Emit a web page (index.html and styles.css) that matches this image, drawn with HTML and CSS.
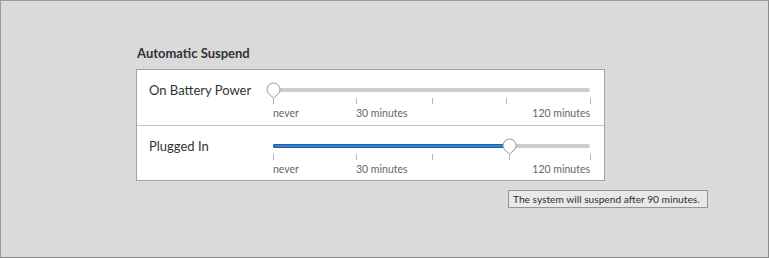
FILE: index.html
```html
<!DOCTYPE html>
<html lang="en">
<head>
  <meta charset="UTF-8" />
  <title>Power</title>
  <link rel="stylesheet" href="styles.css">
</head>
<body>

  <div class="window">
    <div class="panel">
      <h2 class="title">Automatic Suspend</h2>

      <div class="frame">
        <div class="row">
          <div class="row-label">On Battery Power</div>
          <div class="scale">
            <div class="slider">
              <div class="track"></div>
              <div class="knob" style="left: 0px">
                <svg width="17" height="17" viewBox="0 0 17 17"><path d="M8.5 16 L3.9 12.1 A6.5 6.5 0 1 1 13.1 12.1 Z" fill="#fff" stroke="#9a9a9a" stroke-width="1"/></svg>
              </div>
            </div>
            <div class="ticks">
              <span class="tick" style="left: 0px"></span>
              <span class="tick" style="left: 83px"></span>
              <span class="tick" style="left: 159px"></span>
              <span class="tick" style="left: 233px"></span>
              <span class="tick" style="left: 317px"></span>
            </div>
            <div class="marks">
              <span class="mark" style="left: 0px">never</span>
              <span class="mark" style="left: 83px">30 minutes</span>
              <span class="mark end" style="left: 317px">120 minutes</span>
            </div>
          </div>
        </div>

        <div class="row">
          <div class="row-label">Plugged In</div>
          <div class="scale">
            <div class="slider">
              <div class="track"><div class="fill" style="width: 236px"></div></div>
              <div class="knob" style="left: 236px">
                <svg width="17" height="17" viewBox="0 0 17 17"><path d="M8.5 16 L3.9 12.1 A6.5 6.5 0 1 1 13.1 12.1 Z" fill="#fff" stroke="#9a9a9a" stroke-width="1"/></svg>
              </div>
            </div>
            <div class="ticks">
              <span class="tick" style="left: 0px"></span>
              <span class="tick" style="left: 83px"></span>
              <span class="tick" style="left: 159px"></span>
              <span class="tick" style="left: 236px"></span>
              <span class="tick" style="left: 317px"></span>
            </div>
            <div class="marks">
              <span class="mark" style="left: 0px">never</span>
              <span class="mark" style="left: 83px">30 minutes</span>
              <span class="mark end" style="left: 317px">120 minutes</span>
            </div>
          </div>
        </div>
      </div>
    </div>

    <div class="tooltip">The system will suspend after 90 minutes.</div>
  </div>

</body>
</html>
```

FILE: styles.css
```css
* {
  margin: 0;
  padding: 0;
  box-sizing: border-box;
}

body {
  font-family: Lato, "Noto Sans", sans-serif;
  color: #2e3436;
  background: #dadada;
}

.window {
  position: relative;
  width: 769px;
  height: 258px;
  border: 1px solid #9a9a9a;
  border-right-color: #8c8c8c;
  border-bottom-color: #8c8c8c;
  background: #dadada;
  padding: 44px 0 0 135px;
}

.panel {
  width: 469px;
}

.title {
  font-size: 13px;
  font-weight: bold;
  line-height: 16px;
  padding-left: 1px;
  margin-bottom: 8px;
  color: #2e3436;
}

.frame {
  border: 1px solid #a3a3a3;
  background: #fff;
}

.row {
  display: flex;
  padding: 12px 0 5px 12px;
}

.row:first-child {
  padding-bottom: 6px;
}

.row + .row {
  border-top: 1px solid #c4c4c4;
}

.row-label {
  flex: 1;
  font-size: 13px;
  line-height: 16px;
}

/* scale: padding each side so the knob can overhang the track */
.scale {
  width: 338px;
  padding: 0 14px 0 7px;
}

.slider {
  position: relative;
  height: 16px;
}

.track {
  position: absolute;
  left: 0;
  right: 0;
  top: 6px;
  height: 4px;
  border-radius: 2px;
  background: #cdcdcd;
}

.fill {
  height: 4px;
  border-radius: 2px;
  background: #3a7fcf;
  box-shadow: inset 0 0 0 1px #1f5ea8;
}

.knob {
  position: absolute;
  top: 0;
  margin-left: -8px;
  width: 17px;
  height: 17px;
}

.knob svg {
  display: block;
}

.ticks {
  position: relative;
  height: 7px;
}

.tick {
  position: absolute;
  top: 0;
  width: 1px;
  height: 6px;
  background: #b4b4b4;
}

.marks {
  position: relative;
  height: 14px;
  font-size: 10.5px;
  line-height: 14px;
  color: #666;
}

.mark {
  position: absolute;
  top: 1px;
  white-space: nowrap;
}

.mark.end {
  transform: translateX(-100%);
}

.tooltip {
  position: absolute;
  left: 507px;
  top: 189px;
  width: 200px;
  height: 18px;
  padding: 0 4px;
  border: 1px solid #959595;
  background: #e8e8e8;
  font-size: 10.2px;
  line-height: 16px;
  color: #2e2e2e;
  white-space: nowrap;
}
```
